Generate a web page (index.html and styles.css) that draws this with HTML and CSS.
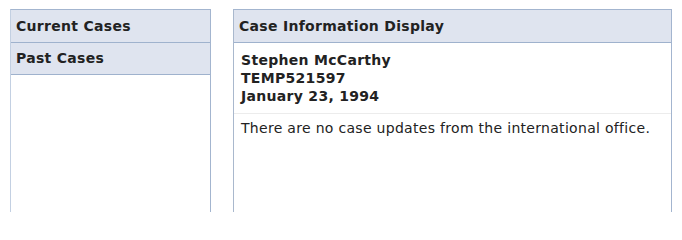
FILE: index.html
```html
<!DOCTYPE html>
<html>
<head>
<meta charset="utf-8">
<link rel="stylesheet" href="styles.css">
</head>
<body>
<div class="page">
  <div class="sidebar">
    <div class="tab">Current Cases</div>
    <div class="tab">Past Cases</div>
  </div>
  <div class="display">
    <div class="display-head">Case Information Display</div>
    <div class="info">
      <div>Stephen McCarthy</div>
      <div>TEMP521597</div>
      <div>January 23, 1994</div>
    </div>
    <div class="updates">There are no case updates from the international office.</div>
  </div>
</div>
</body>
</html>
```
FILE: styles.css
```css
html, body {
  margin: 0;
  padding: 0;
  background: #ffffff;
  height: 212px;
  overflow: hidden;
}
body {
  font-family: "DejaVu Sans", Verdana, sans-serif;
  font-size: 14px;
  letter-spacing: 0.3px;
  color: #222222;
}
.page {
  display: flex;
  gap: 22px;
  padding: 9px 0 0 10px;
  height: 212px;
  box-sizing: border-box;
}
.sidebar {
  width: 201px;
  border: 1px solid #a3b5cf;
  border-left-color: #c3d0e2;
  border-bottom: none;
  box-sizing: border-box;
  background: #ffffff;
}
.tab {
  height: 32px;
  line-height: 31px;
  padding-left: 5px;
  background: #dfe4ef;
  border-bottom: 1px solid #9fb2cd;
  font-weight: bold;
  box-sizing: border-box;
}
.tab:first-child {
  height: 33px;
  line-height: 32px;
}
.display {
  width: 439px;
  border: 1px solid #a9b8cd;
  border-right-color: #a3b5cf;
  border-top-color: #a3b5cf;
  border-bottom: none;
  box-sizing: border-box;
}
.display-head {
  height: 33px;
  line-height: 32px;
  padding-left: 5px;
  background: #dfe4ef;
  border-bottom: 1px solid #9fb2cd;
  font-weight: bold;
  box-sizing: border-box;
}
.info {
  padding: 8px 7px 8px 7px;
  font-weight: bold;
  line-height: 18px;
  border-bottom: 1px solid #ececec;
}
.updates {
  padding: 5px 7px;
  line-height: 18px;
}
```
